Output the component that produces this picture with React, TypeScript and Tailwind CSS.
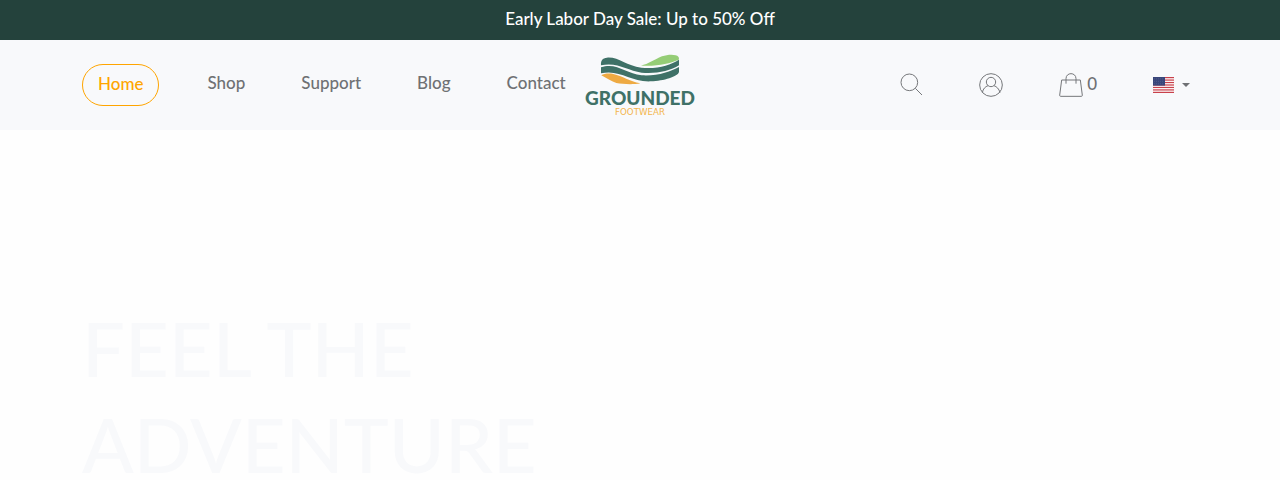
const LINKS = ["Shop", "Support", "Blog", "Contact"];

const STRIPES = [0, 2, 4, 6, 8, 10, 12];

function Logo() {
  return (
    <svg viewBox="42 42 336 186" className="h-[62px] w-28" role="img" aria-label="Grounded Footwear">
      <path
        d="M213 77C235 72 252 59 276 49C296 42 319 43 325 50C328 54 327 58 325 60C298 70 263 80 213 77Z"
        fill="#95cd76"
      />
      <path
        d="M93 76C92 62 97 54 111 53C145 50 169 78 214 83C262 88 300 75 327 59V76C300 93 254 103 215 98C172 92 143 65 93 76Z"
        fill="#3f7167"
      />
      <path
        d="M93 82C142 67 168 102 215 106C261 109 302 95 327 81V96C324 109 281 123 243 124C181 127 151 87 93 100Z"
        fill="#3f7167"
      />
      <path
        d="M94 106C101 101 116 99 130 102C158 108 178 124 211 130C192 134 159 133 139 129C122 124 108 113 94 106Z"
        fill="#eeaa43"
      />
      <text x="210" y="194" textAnchor="middle" fontFamily="Lato, sans-serif" fontWeight="900" fontSize="57" fill="#3f7167">
        GROUNDED
      </text>
      <text x="210" y="226" textAnchor="middle" fontFamily="DejaVu Sans, sans-serif" fontSize="26" fill="#f3b54d">
        FOOTWEAR
      </text>
    </svg>
  );
}

function SearchIcon() {
  return (
    <svg viewBox="57 69 72 72" className="size-6" fill="none" stroke="#75777a" strokeWidth="3">
      <circle cx="88" cy="97" r="25" />
      <path d="M106 115L126 135" />
    </svg>
  );
}

function UserIcon() {
  return (
    <svg viewBox="298 67 72 72" className="size-6" fill="none" stroke="#75777a" strokeWidth="3">
      <circle cx="334" cy="103" r="34" />
      <circle cx="334" cy="94" r="14" />
      <path d="M308 126C310 114 317 108 325 105M343 105C351 108 358 114 361 126" />
    </svg>
  );
}

function BagIcon() {
  return (
    <svg viewBox="58 67 72 72" className="size-6" fill="none" stroke="#75777a" strokeWidth="3">
      <path d="M66 88H122L128 134Q128 137 125 137H63Q60 137 60 134Z" />
      <path d="M79 99V84C79 64 109 64 109 84V99" />
    </svg>
  );
}

function Flag() {
  return (
    <svg viewBox="0 0 21 13" preserveAspectRatio="none" className="h-4 w-[21px]">
      <path d="M0 0H21V13H0Z" fill="#fff" />
      {STRIPES.map((y) => (
        <rect key={y} y={y} width="21" height="1" fill="#c8414b" />
      ))}
      <path d="M0 0H12V7H0Z" fill="#39467a" />
      <path d="M1 1.5H11M1 3.5H11M1 5.5H11" stroke="#6a759b" strokeWidth=".6" strokeDasharray=".7 1.3" />
    </svg>
  );
}

export default function App() {
  return (
    <div className="min-h-screen bg-[#fefefe] font-['Lato',sans-serif] text-[17px] leading-6 font-medium text-[#6f7174]">
      <div className="bg-[#24423c] px-3 pt-[7px] pb-[9px] text-center text-white">
        Early Labor Day Sale: Up to 50% Off
      </div>

      <header className="bg-[#f8f9fb]">
        <div className="mx-auto grid h-[90px] max-w-[1140px] grid-cols-[1fr_auto_1fr] items-center px-3">
          <nav className="flex items-center gap-14 whitespace-nowrap">
            <a href="#" className="-mr-2 rounded-full border border-[#ffa500] px-[15px] pt-[7px] pb-[9px] text-[#ffa500]">
              Home
            </a>
            {LINKS.map((link) => (
              <a key={link} href="#" className="pb-1">
                {link}
              </a>
            ))}
          </nav>

          <a href="#">
            <Logo />
          </a>

          <div className="flex items-center justify-end gap-14 pr-2">
            <button type="button" aria-label="Search">
              <SearchIcon />
            </button>
            <button type="button" aria-label="Account">
              <UserIcon />
            </button>
            <button type="button" aria-label="Cart" className="flex items-center gap-1">
              <BagIcon />
              <span className="pb-0.5">0</span>
            </button>
            <button type="button" aria-label="Country" className="flex items-center gap-2">
              <Flag />
              <span className="border-x-4 border-t-4 border-x-transparent border-t-[#6f7174]" />
            </button>
          </div>
        </div>
      </header>

      <main className="mx-auto max-w-[1140px] px-3 pt-[170px]">
        <h1 className="w-1/2 text-[76px] leading-24 font-medium text-[#f8f9fb]">FEEL THE ADVENTURE</h1>
      </main>
    </div>
  );
}
